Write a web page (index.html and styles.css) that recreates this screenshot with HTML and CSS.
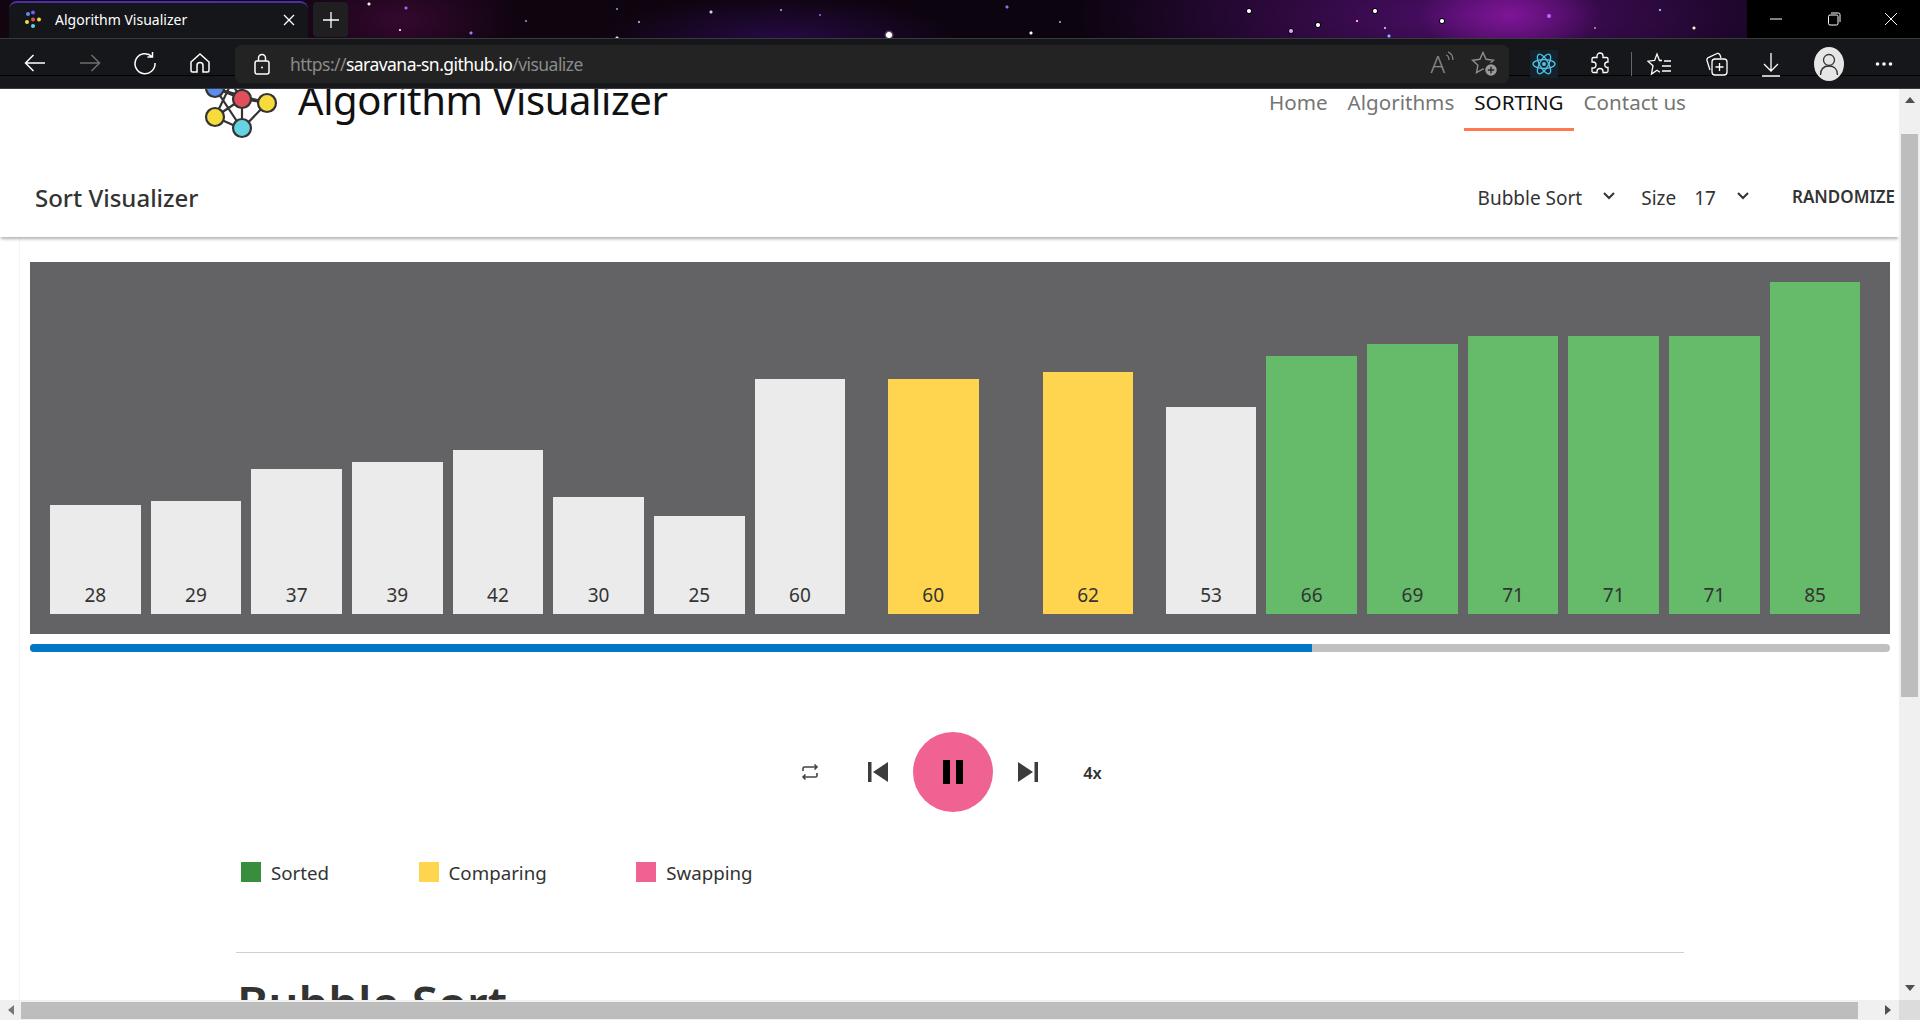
FILE: index.html
```html
<!DOCTYPE html>
<html lang="en">
<head>
<meta charset="utf-8">
<title>Algorithm Visualizer</title>
<link rel="stylesheet" href="styles.css">
</head>
<body>
<div class="window">
  <div class="tabstrip">
    <div class="tab">
      <svg class="favicon" width="20" height="20" viewBox="0 0 20 20"><circle cx="5" cy="4" r="2" fill="#5b8def"/><circle cx="10" cy="2.500" r="2" fill="#7a5cf0"/><circle cx="10" cy="9.500" r="2" fill="#e0505c"/><circle cx="4" cy="12" r="2" fill="#f5dc3a"/><circle cx="16" cy="9.500" r="2" fill="#f5dc3a"/><circle cx="10" cy="16" r="2" fill="#66d4e0"/></svg>
      <span class="tab-title">Algorithm Visualizer</span>
      <svg class="tab-close" width="12" height="12" viewBox="0 0 12 12"><path d="M1 1l10 10M11 1L1 11" stroke="#fff" stroke-width="1.300" fill="none"/></svg>
    </div>
    <div class="newtab"><svg width="18" height="18" viewBox="0 0 18 18"><path d="M9 1v16M1 9h16" stroke="#fff" stroke-width="1.300" fill="none"/></svg></div>
    <div class="winctl">
      <svg width="14" height="14" viewBox="0 0 14 14"><path d="M1 7h12" stroke="#fff" stroke-width="1"/></svg>
      <svg width="14" height="14" viewBox="0 0 14 14" fill="none" stroke="#fff" stroke-width="1"><rect x="1.500" y="3" width="9.500" height="10" rx="1.500"/><path d="M4 1h7.500a1.500 1.500 0 0 1 1.500 1.500V10"/></svg>
      <svg width="14" height="14" viewBox="0 0 14 14"><path d="M1 1l12 12M13 1L1 13" stroke="#fff" stroke-width="1"/></svg>
    </div>
  </div>

  <div class="toolbar">
    <div class="navbtns">
      <svg width="24" height="24" viewBox="0 0 24 24" class="ico"><path d="M22 12H2.500M10.500 4l-8 8 8 8"/></svg>
      <svg width="24" height="24" viewBox="0 0 24 24" class="ico dim"><path d="M2 12h19.500M13.500 4l8 8-8 8"/></svg>
      <svg width="24" height="24" viewBox="0 0 24 24" class="ico"><path d="M19 5.500A10 10 0 1 0 22 12M19.500 1v5h-5"/></svg>
      <svg width="24" height="24" viewBox="0 0 24 24" class="ico"><path d="M3 11l9-8 9 8v8.500a1.500 1.500 0 0 1-1.500 1.500H15v-6.500a3 3 0 0 0-6 0V21H4.500A1.500 1.500 0 0 1 3 19.500z"/></svg>
    </div>
    <div class="omnibox">
      <svg width="20" height="22" viewBox="0 0 20 22" class="ico"><rect x="3" y="8" width="14" height="13" rx="2"/><path d="M6.500 8V5a3.500 3.500 0 0 1 7 0v3"/><circle cx="10" cy="14.500" r="1" fill="#fff" stroke="none"/></svg>
      <span class="url"><span class="url-dim">https://</span>saravana-sn.github.io<span class="url-dim">/visualize</span></span>
      <span class="omni-right">
        <span class="readaloud">A<svg width="10" height="14" viewBox="0 0 10 14" fill="none" stroke="#8a8a8a" stroke-width="1.200"><path d="M1 5q3 1 3 5M3 2q5 2 5 8"/></svg></span>
        <svg width="28" height="28" viewBox="0 0 28 28" fill="none" stroke="#8f8f8f" stroke-width="1.400"><path d="M12 2.500l3.100 6.800 7.400.9-5.400 5.100 1.400 7.300-6.500-3.600-6.500 3.600 1.400-7.300L1.500 10.200l7.400-.9z"/><circle cx="20" cy="20" r="6.500" fill="#9a9a9a" stroke="#232323" stroke-width="1.500"/><path d="M20 16.800v6.400M16.800 20h6.400" stroke="#232323" stroke-width="1.400"/></svg>
      </span>
    </div>
    <div class="tools">
      <span class="tool-react"><svg width="24" height="24" viewBox="0 0 24 24" fill="none" stroke="#4fc3e8" stroke-width="1.300"><ellipse cx="12" cy="12" rx="11" ry="4.300"/><ellipse cx="12" cy="12" rx="11" ry="4.300" transform="rotate(60 12 12)"/><ellipse cx="12" cy="12" rx="11" ry="4.300" transform="rotate(120 12 12)"/><circle cx="12" cy="12" r="2" fill="#4fc3e8" stroke="none"/></svg></span>
      <svg width="24" height="24" viewBox="0 0 24 24" class="ico thin"><path d="M9 4a3 3 0 0 1 6 0v1.500h3.500a1.500 1.500 0 0 1 1.500 1.500v3h-1a2.800 2.800 0 0 0 0 5.500h1v3.500a1.500 1.500 0 0 1-1.500 1.500H15v-1a3 3 0 0 0-6 0v1H5.500A1.500 1.500 0 0 1 4 19.500V16h1a3 3 0 0 0 0-6H4V7a1.500 1.500 0 0 1 1.500-1.500H9z"/></svg>
      <span class="tool-sep"></span>
      <svg width="26" height="26" viewBox="0 0 26 26" class="ico thin"><path d="M15 9.500h-2.500L10 3 7.600 9.500 1 10.200l5 4.500L4.500 23l5.500-3.800 3 2M17 10h7M15 15h9M15 20h9"/></svg>
      <svg width="26" height="26" viewBox="0 0 26 26" class="ico thin"><path d="M7 19l-3-9.500a2.500 2.500 0 0 1 1.800-3.100L14 2.500a2.500 2.500 0 0 1 3 1.500l1 3"/><rect x="9" y="8" width="15" height="16" rx="3"/><path d="M16.500 12v8M12.500 16h8"/></svg>
      <svg width="24" height="26" viewBox="0 0 24 26" class="ico thin"><path d="M12 2v18M5 13l7 7 7-7M3 25h18"/></svg>
      <span class="avatar"><svg width="20" height="24" viewBox="0 0 20 24" fill="none" stroke="#333" stroke-width="1.300"><circle cx="10" cy="8" r="5.500"/><path d="M1.500 23c0-6 3.500-9 8.500-9s8.500 3 8.500 9"/></svg></span>
      <svg width="18" height="6" viewBox="0 0 18 6" fill="#fff"><circle cx="2.500" cy="3" r="1.800"/><circle cx="9" cy="3" r="1.800"/><circle cx="15.500" cy="3" r="1.800"/></svg>
    </div>
  </div>

  <div class="viewport">
    <div class="page">
      <header class="site-header">
        <svg class="logo" width="84" height="84" viewBox="0 0 84 84" fill="none" stroke="#333" stroke-width="2.200">
          <path d="M13 13L40 24M13 13L65 28M13 13L40 54M13 42L40 24M13 42L27 13M13 42L40 54M40 24L65 28M40 24L40 54M65 28L40 54M40 24L27 5"/>
          <circle cx="13" cy="13" r="9" fill="#5b8def"/>
          <circle cx="40" cy="24" r="9" fill="#e0505c"/>
          <circle cx="65" cy="28" r="9" fill="#f5dc3a"/>
          <circle cx="13" cy="42" r="9" fill="#f5dc3a"/>
          <circle cx="40" cy="53" r="9" fill="#66d4e0"/>
        </svg>
        <h1 class="site-title">Algorithm Visualizer</h1>
        <nav class="site-nav">
          <a class="nav-link">Home</a>
          <a class="nav-link">Algorithms</a>
          <a class="nav-link active">SORTING</a>
          <a class="nav-link">Contact us</a>
        </nav>
      </header>

      <section class="appbar">
        <h2 class="appbar-title">Sort Visualizer</h2>
        <div class="appbar-tools">
          <span class="select sel-algo">Bubble Sort<svg class="chev" width="12" height="8" viewBox="0 0 12 8"><path d="M1 1l5 5 5-5" fill="none" stroke="#333" stroke-width="2"/></svg></span>
          <span class="size-label">Size</span>
          <span class="select sel-size">17<svg class="chev" width="12" height="8" viewBox="0 0 12 8"><path d="M1 1l5 5 5-5" fill="none" stroke="#333" stroke-width="2"/></svg></span>
          <span class="randomize">RANDOMIZE</span>
        </div>
      </section>

      <main class="content">
        <div class="chart">
          <div class="bar" style="height:109px">28</div>
          <div class="bar" style="height:113px">29</div>
          <div class="bar" style="height:145px">37</div>
          <div class="bar" style="height:152px">39</div>
          <div class="bar" style="height:164px">42</div>
          <div class="bar" style="height:117px">30</div>
          <div class="bar" style="height:98px">25</div>
          <div class="bar" style="height:235px">60</div>
          <div class="bar comparing swap-a" style="height:235px">60</div>
          <div class="bar comparing swap-b" style="height:242px">62</div>
          <div class="bar swap-c" style="height:207px">53</div>
          <div class="bar sorted" style="height:258px">66</div>
          <div class="bar sorted" style="height:270px">69</div>
          <div class="bar sorted" style="height:278px">71</div>
          <div class="bar sorted" style="height:278px">71</div>
          <div class="bar sorted" style="height:278px">71</div>
          <div class="bar sorted" style="height:332px">85</div>
        </div>
        <div class="slider"><div class="slider-fill" style="width:68.9%"></div></div>

        <div class="controls">
          <svg class="ctl-repeat" width="24" height="24" viewBox="0 0 24 24" fill="none" stroke="#444" stroke-width="1.600"><path d="M5 11V8.500A1.500 1.500 0 0 1 6.500 7H19M16.500 4.500L19 7l-2.500 2.500M19 13v2.500a1.500 1.500 0 0 1-1.500 1.500H5M7.500 14.500L5 17l2.500 2.500"/></svg>
          <svg class="ctl-skip" width="28" height="28" viewBox="0 0 28 28" fill="#3c3c3c"><rect x="4" y="4" width="3.500" height="20"/><path d="M24 4v20L9 14z"/></svg>
          <div class="ctl-play"><svg width="20" height="24" viewBox="0 0 20 24" fill="#000"><rect width="7" height="24"/><rect x="13" width="7" height="24"/></svg></div>
          <svg class="ctl-skip" width="28" height="28" viewBox="0 0 28 28" fill="#3c3c3c"><rect x="20.500" y="4" width="3.500" height="20"/><path d="M4 4v20l15-10z"/></svg>
          <span class="ctl-speed">4x</span>
        </div>

        <div class="legend">
          <div class="legend-item"><span class="swatch swatch-sorted"></span>Sorted</div>
          <div class="legend-item"><span class="swatch swatch-comparing"></span>Comparing</div>
          <div class="legend-item"><span class="swatch swatch-swapping"></span>Swapping</div>
        </div>

        <section class="article">
          <h2 class="article-title">Bubble Sort</h2>
        </section>
      </main>
    </div>

    <div class="vscroll">
      <svg class="arrow" width="12" height="8" viewBox="0 0 12 8"><path d="M6 1l5 6H1z" fill="#505050"/></svg>
      <div class="vthumb"></div>
      <svg class="arrow arrow-end" width="12" height="8" viewBox="0 0 12 8"><path d="M6 7L1 1h10z" fill="#505050"/></svg>
    </div>
    <div class="hscroll">
      <svg class="harrow" width="8" height="12" viewBox="0 0 8 12"><path d="M1 6l6-5v10z" fill="#777"/></svg>
      <div class="hthumb"></div>
      <svg class="harrow" width="8" height="12" viewBox="0 0 8 12"><path d="M7 6L1 1v10z" fill="#505050"/></svg>
    </div>
    <div class="corner"></div>
  </div>
</div>
</body>
</html>
```
FILE: styles.css
```css
* { box-sizing: border-box; }
html, body { margin: 0; height: 100%; overflow: hidden; }
body { font-family: "Noto Sans", "Open Sans", sans-serif; color: #333; background: #fff; }
.window { height: 1020px; display: grid; grid-template-rows: 39px 50px 1fr; }

.tabstrip {
  display: flex; align-items: flex-end; padding-left: 9px;
  background-color: #07030f;
  background-image:
    radial-gradient(circle at 369px 4px, #eee 0 1px, transparent 2px),
    radial-gradient(circle at 406px 8px, #a468ff 0 1px, transparent 2px),
    radial-gradient(circle at 400px 30px, #ffb0d0 0 .8px, transparent 1.6px),
    radial-gradient(circle at 471px 33px, #8888ff 0 1px, transparent 2px),
    radial-gradient(circle at 526px 21px, #777799 0 .8px, transparent 1.6px),
    radial-gradient(circle at 639px 22px, #9999bb 0 .8px, transparent 1.6px),
    radial-gradient(circle at 711px 12px, #ccccff 0 1px, transparent 2px),
    radial-gradient(circle at 617px 9px, #777799 0 .8px, transparent 1.6px),
    radial-gradient(circle at 617px 38px, #eee 0 1px, transparent 2px),
    radial-gradient(circle at 889px 35px, #fff 0 2.5px, rgba(255,255,255,.3) 3.5px, transparent 5px),
    radial-gradient(circle at 1031px 33px, #fff 0 1px, transparent 2px),
    radial-gradient(circle at 1007px 7px, #a468ff 0 1px, transparent 2px),
    radial-gradient(circle at 781px 10px, #8888aa 0 .8px, transparent 1.6px),
    radial-gradient(circle at 820px 15px, #8050c0 0 .8px, transparent 1.6px),
    radial-gradient(circle at 1060px 22px, #8888aa 0 .8px, transparent 1.6px),
    radial-gradient(circle at 1249px 11px, #fff 0 1.5px, #000 2.5px, transparent 3.5px),
    radial-gradient(circle at 1375px 11px, #fff 0 1.5px, #000 2.5px, transparent 3.5px),
    radial-gradient(circle at 1318px 25px, #fff 0 1.5px, #000 2.5px, transparent 3.5px),
    radial-gradient(circle at 1291px 31px, #e0a0ff 0 1.5px, #000 2.5px, transparent 3.5px),
    radial-gradient(circle at 1442px 21px, #fff 0 1.5px, #000 2.5px, transparent 3.5px),
    radial-gradient(circle at 1549px 16px, #c060ff 0 1.5px, transparent 2.5px),
    radial-gradient(circle at 1694px 28px, #ffeecc 0 1px, transparent 2px),
    radial-gradient(circle at 1389px 36px, #88bbff 0 1px, transparent 2px),
    radial-gradient(circle at 1357px 21px, #ff9fc0 0 .8px, transparent 1.6px),
    radial-gradient(circle at 1660px 10px, #99aaff 0 .8px, transparent 1.6px),
    radial-gradient(circle at 1385px 28px, #c9a0e0 0 .8px, transparent 1.6px),
    radial-gradient(circle at 1595px 28px, #c060a0 0 .8px, transparent 1.6px),
    radial-gradient(ellipse 90px 45px at 1510px 15px, #7d1596, transparent),
    radial-gradient(ellipse 400px 100px at 1470px 15px, #4c0e68, transparent),
    radial-gradient(ellipse 180px 45px at 780px 40px, #260a44, transparent),
    radial-gradient(ellipse 120px 55px at 400px 20px, #34082f, transparent),
    linear-gradient(90deg, #12050f 0, #07030f 100%);
  border-bottom: 1px solid #3a3a3c;
  position: relative;
}
.tab {
  width: 299px; height: 37px; display: flex; align-items: center; gap: 13px; padding: 0 13px 2px 14px;
  background: #15161a; border-top: 2px solid #4c2fa8; border-radius: 8px 8px 0 0;
  color: #fff; font-size: 14px;
}
.tab-title { flex: 1; font-size: 14px; margin-left: -1px; }
.newtab { width: 35px; height: 35px; margin: 0 0 1px 5px; display: flex; align-items: center; justify-content: center; background: #1f1f22; border-radius: 4px; }
.winctl { margin-left: auto; width: 173px; height: 38px; background: #000; display: flex; align-items: center; justify-content: space-between; padding: 0 22px; }

.toolbar {
  display: flex; align-items: flex-start; padding-top: 6px; height: 50px;
  background: linear-gradient(#16171a 0 36px, #000 36px 37px, #17181b 37px 49px, #3b3b3d 49px 50px);
}
.ico { fill: none; stroke: #fff; stroke-width: 1.500; }
.ico.thin { stroke-width: 1.300; }
.ico.dim { stroke: #6e6e6e; }
.navbtns { width: 235px; height: 36px; display: flex; align-items: center; gap: 31px; padding-left: 23px; }
.omnibox {
  width: 1274px; height: 38px; background: #232323; border-radius: 6px; display: flex; align-items: center;
  padding: 0 10px 0 17px; gap: 15px;
}
.url { margin-left: 3px; font-size: 17.500px; color: #fff; letter-spacing: -.54px; }
.url-dim { color: #8a8a8a; }
.omni-right { margin-left: auto; display: flex; align-items: center; gap: 16px; }
.readaloud { color: #8a8a8a; font-size: 24px; font-weight: 300; line-height: 28px; display: flex; align-items: flex-start; }
.tools { flex: 1; height: 38px; display: flex; align-items: center; padding-left: 21px; gap: 30px; }
.tool-react { display: flex; padding: 2px; background: #14222b; }
.tool-sep { width: 1px; height: 24px; margin: 0 -15px 0 -11px; background: #666; }
.avatar { width: 30px; height: 34px; margin: 0 1px 0 1px; border-radius: 50%; background: #e6e6e6; display: flex; align-items: center; justify-content: center; }

.viewport { display: grid; grid-template-columns: 1fr 21px; grid-template-rows: 1fr 20px; overflow: hidden; min-height: 0; }
.page { overflow: hidden; min-height: 0; min-width: 0; }

.site-header { height: 67px; display: flex; align-items: flex-start; padding: 0 203px 0 202px; background: #fff; }
.logo { flex: none; margin-top: -14px; overflow: visible; }
.site-title { margin: -14px 0 0 12px; font-size: 40px; line-height: 50px; font-weight: 400; color: #111; letter-spacing: -.4px; white-space: nowrap; }
.site-nav { margin-left: auto; display: flex; }
.nav-link { height: 42px; padding: 0 10px; font-size: 20.600px; line-height: 26px; color: #757575; border-bottom: 3px solid transparent; }
.nav-link.active { color: #111; border-bottom-color: #ff7a50; }

.appbar { height: 81px; padding: 0 4px 0 35px; display: flex; align-items: center; justify-content: space-between; background: #fff; box-shadow: 0 3px 3px -1px rgba(0,0,0,.3); position: relative; }
.appbar-title { margin: 1px 0 0; font-size: 24px; font-weight: 500; color: #333; }
.appbar-tools { display: flex; align-items: center; font-size: 19px; color: #333; margin-top: 2px; }
.select { display: flex; align-items: center; }
.chev { margin-top: -4px; }
.sel-algo { gap: 21px; margin-right: 26px; }
.size-label { margin-right: 18px; }
.sel-size { gap: 21px; margin-right: 43px; }
.randomize { font-size: 17px; font-weight: 600; margin-top: -2px; }

.content { margin-left: 19px; border-left: 1px solid #f5f5f5; padding: 25px 9px 0 10px; background: #fff; }
.chart { height: 372px; background: #636365; padding: 0 20px 20px; display: flex; align-items: flex-end; gap: 10px; }
.bar { flex: none; width: 90.670px; background: #ebebeb; display: flex; align-items: flex-end; justify-content: center; padding-bottom: 7px; font-size: 19px; line-height: 24px; color: #333; }
.bar.comparing { background: #ffd54f; }
.bar.sorted { background: #66bb6a; }
.swap-a { margin-left: 32.600px; }
.swap-b { margin-left: 54.300px; }
.swap-c { margin-left: 22.300px; }
.slider { height: 8px; margin-top: 10px; background: #c0c0c0; border-radius: 4px; overflow: hidden; }
.slider-fill { height: 100%; background: #0277c6; }

.controls { margin-top: 80px; height: 80px; padding-right: 20px; display: flex; align-items: center; justify-content: center; }
.ctl-repeat { margin-right: 42px; }
.ctl-play { width: 80px; height: 80px; margin: 0 21px; border-radius: 50%; background: #f06292; display: flex; align-items: center; justify-content: center; }
.ctl-speed { margin-left: 41px; font-size: 16.500px; font-weight: 600; }

.legend { margin: 50px 0 0 211px; height: 20px; display: flex; gap: 89.500px; font-size: 18.700px; }
.legend-item { display: flex; align-items: center; gap: 10px; color: #333; line-height: 22px; padding-top: 2px; }
.swatch { width: 20px; height: 20px; margin-top: -2px; }
.swatch-sorted { background: #388e3c; }
.swatch-comparing { background: #ffd54f; }
.swatch-swapping { background: #f06292; }

.article { margin: 70px 0 0 206px; width: 1448px; border-top: 1px solid #d0d0d0; }
.article-title { margin: 18px 0 0 1px; font-size: 47.500px; line-height: 64px; font-weight: 600; color: #333; }

.vscroll { background: #f0f0f0; display: flex; flex-direction: column; align-items: center; grid-row: 1; grid-column: 2; padding: 7px 0 8px; }
.arrow { flex: none; }
.vthumb { width: 17px; height: 563px; margin-top: 30px; background: #bdbdbd; }
.arrow-end { margin-top: auto; }
.hscroll { background: #f0f0f0; display: flex; align-items: center; grid-row: 2; grid-column: 1; padding: 0 7px; }
.hthumb { width: 1837px; height: 17px; margin: 0 0 0 6px; background: #bdbdbd; }
.harrow { flex: none; }
.hscroll .harrow:last-child { margin-left: 26px; }
.corner { background: #dcdcdc; grid-row: 2; grid-column: 2; }
```
